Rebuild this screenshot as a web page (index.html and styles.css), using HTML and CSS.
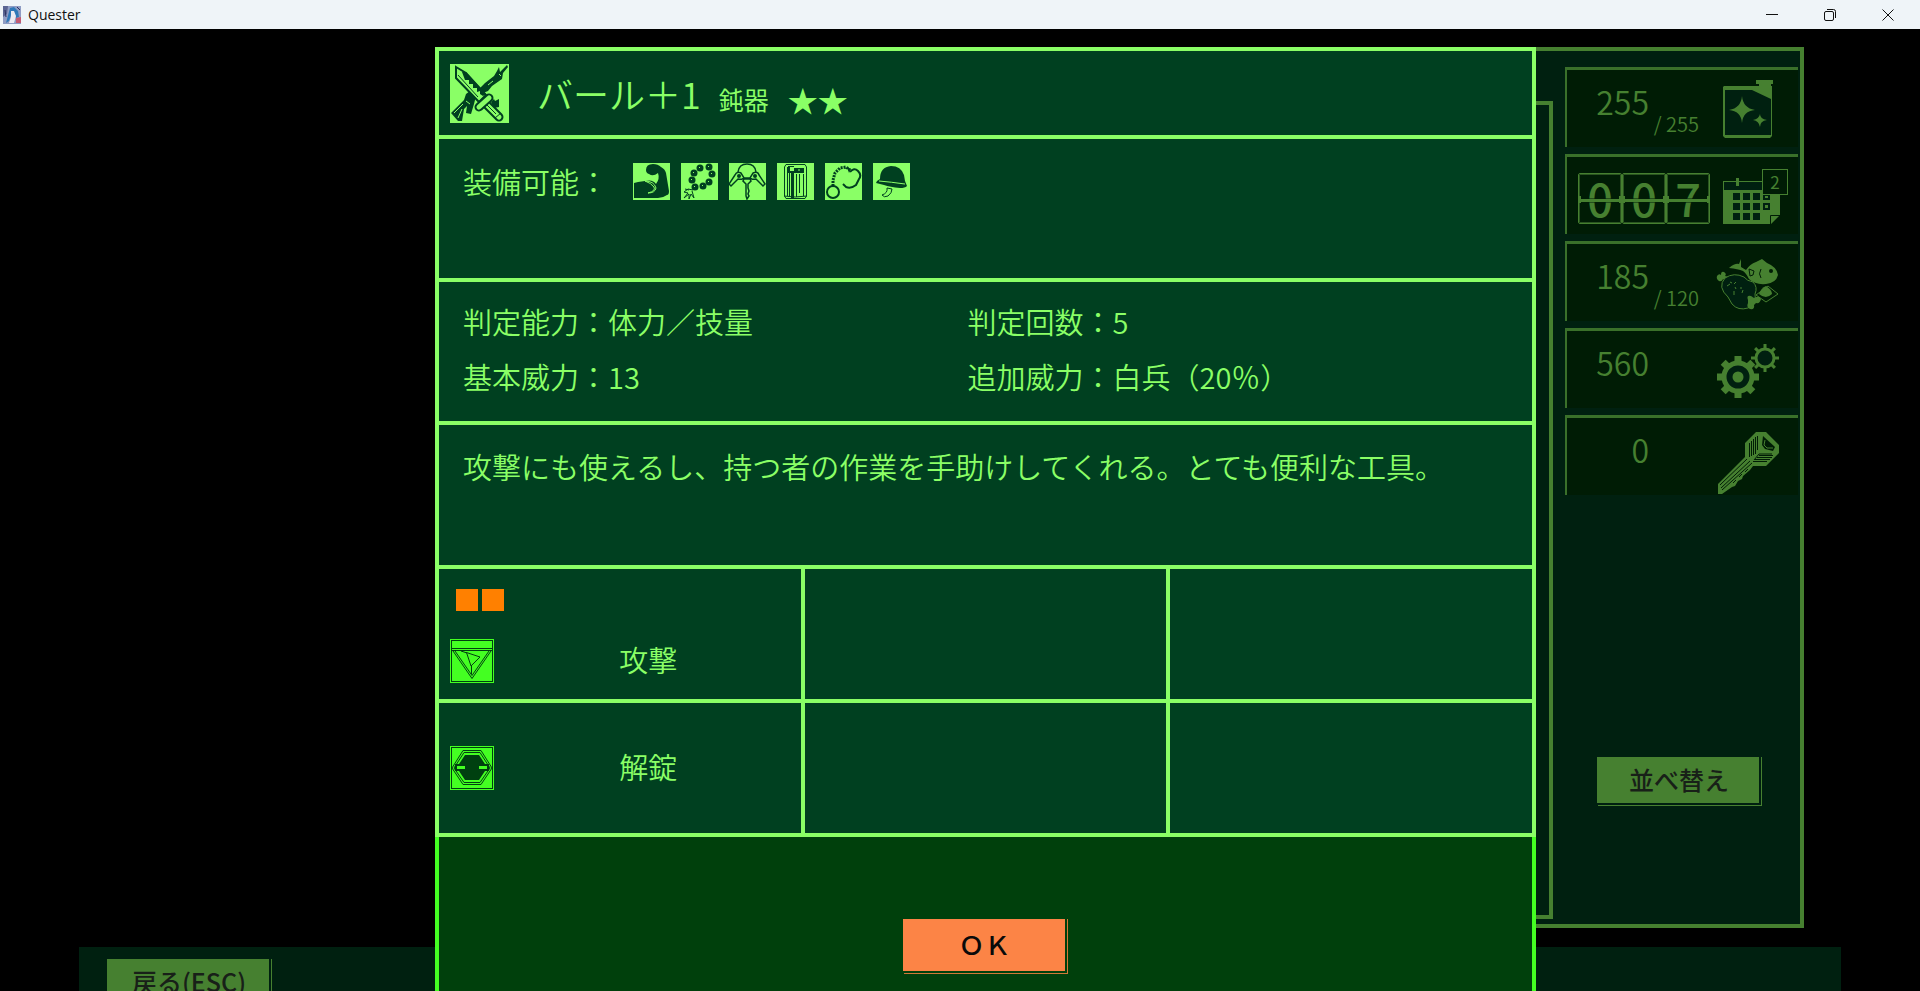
FILE: index.html
```html
<!DOCTYPE html>
<html lang="ja">
<head>
    <meta charset="UTF-8">
    <meta name="viewport" content="width=device-width, initial-scale=1.0">
    <title>Quester</title>
    <link rel="stylesheet" href="styles.css">
</head>
<body>

    <header class="titlebar">
        <svg class="app-icon" viewBox="0 0 18 18" aria-hidden="true">
            <rect width="18" height="18" fill="#8f9cc4"/>
            <path d="M0 0h5l-1 8-4 3z" fill="#5a6492"/>
            <path d="M7 2l4-1 4 4 1 6-3 1-2-6-3 3-2 6-3 2z" fill="#2f78b8"/>
            <path d="M8 5l3 0 2 5-2 7H6l2-6z" fill="#eceaf2"/>
            <path d="M13 12l5-1v6h-5z" fill="#c25a72"/>
            <path d="M2 4l1 7M14 1l3 3" stroke="#2b3160"/>
        </svg>
        <span class="app-name">Quester</span>
        <button class="win-button" aria-label="最小化">
            <svg viewBox="0 0 12 12"><path d="M0 5.500h12"/></svg>
        </button>
        <button class="win-button" aria-label="元に戻す">
            <svg viewBox="0 0 12 12"><rect x=".5" y="2.500" width="9" height="9" rx="1.500"/><path d="M3 .5h6.500a2 2 0 0 1 2 2V9"/></svg>
        </button>
        <button class="win-button" aria-label="閉じる">
            <svg viewBox="0 0 12 12"><path d="M.5.500l11 11M11.500.500l-11 11"/></svg>
        </button>
    </header>

    <main class="stage">

        <!-- 倉庫画面 -->
        <section class="base">
            <div class="item-list"></div>
            <aside class="status">
                <div class="resource">
                    <span class="value">255</span><span class="limit">/ 255</span>
                    <svg class="resource-icon" viewBox="0 0 72 78">
                        <path d="M8 18H56V67H8z" fill="#002010"/>
                        <path fill-rule="evenodd" d="M8 17H43V15H40V11H57V15H55V17H56V67L54 69H9L7 67V18zM9 21V66H55V30L36 21z"/>
                        <path d="M26 27Q27 39 39 41 27 42 26 54 25 42 13 41 25 39 26 27zM44 45Q44 50 51 51 44 52 44 58 43 52 37 51 43 50 44 45z"/>
                    </svg>
                </div>
                <div class="resource">
                    <div class="counter"><span>0</span><span>0</span><span>7</span></div>
                    <div class="calendar">
                        <svg class="resource-icon" viewBox="0 0 72 78">
                            <rect x="7.500" y="25.500" width="50" height="9" fill="#002010" stroke="#468030"/>
                            <path d="M7 34H64V59L55 68H7zM20 22h3v8h-3z"/>
                            <path d="M54.500 68V59.500H64" fill="none" stroke="#001c05"/>
                            <g fill="#002010">
                                <path d="M17 37h7v7h-7zM27 37h7v7h-7zM37 37h7v7h-7zM47 37h7v7h-7zM17 47h7v7h-7zM27 47h7v7h-7zM37 47h7v7h-7zM47 47h7v7h-7zM17 57h7v7h-7zM27 57h7v7h-7zM37 57h7v7h-7z"/>
                            </g>
                            <path d="M49 49h3v3h-3zM49 40h3v2h-3z"/>
                        </svg>
                        <span class="badge">2</span>
                    </div>
                </div>
                <div class="resource">
                    <span class="value">185</span><span class="limit">/ 120</span>
                    <svg class="resource-icon" viewBox="0 0 72 78">
                        <path d="M13 25Q19 20 23 21L25 16V24L30 27Q34 21 40 19L46 16 51 20Q61 24 62 32 60 40 50 41 39 42 33 36 30 30 27 28 22 26 13 25z"/>
                        <path d="M33 26L38 28 37 32 34 33z" fill="none" stroke="#001c05"/>
                        <path d="M45 26Q42 31 45 35" fill="none" stroke="#001c05"/>
                        <ellipse cx="55" cy="28" rx="2" ry="2" fill="#001c05"/>
                        <path d="M1 33q2-3 4-1 0-4 3-3 3 2 1 4l4 1-3 3-3-1q-1 3-4 2-3-2-2-5z"/>
                        <path d="M9 35Q18 29 28 34 31 38 37 39 42 44 39 51 41 61 32 65 22 68 16 61L12 54Q1 44 9 35z" fill="#002010" stroke="#468030"/>
                        <path d="M11 43l3-2M14 39l2 1M18 41l2-2M19 44l1 2M27 47l-1 3M18 48v4M24 45h2" stroke="#468030"/>
                        <path d="M40 52L52 43 62 51 50 59z" fill="#001c05" stroke="#468030"/>
                        <path d="M43 51Q45 45 50 43 56 47 56 51 50 57 43 51z"/>
                        <path d="M32 57q-2-5 3-4l3 2q5-3 7 1-1 5-5 4l-2 2q1 5-4 4-4-2-2-6z"/>
                    </svg>
                </div>
                <div class="resource">
                    <span class="value">560</span>
                    <svg class="resource-icon" viewBox="0 0 72 78">
                        <g transform="translate(49 28)">
                            <circle r="9" fill="#002010" stroke="#468030" stroke-width="3"/>
                            <path id="tooth-s" d="M-1.500-14h3v5h-3z"/>
                            <use href="#tooth-s" transform="rotate(45)"/><use href="#tooth-s" transform="rotate(90)"/><use href="#tooth-s" transform="rotate(135)"/><use href="#tooth-s" transform="rotate(180)"/><use href="#tooth-s" transform="rotate(225)"/><use href="#tooth-s" transform="rotate(270)"/><use href="#tooth-s" transform="rotate(315)"/>
                        </g>
                        <g transform="translate(22 47)">
                            <circle r="14" fill="#002010" stroke="#468030" stroke-width="5"/>
                            <circle r="5.500"/>
                            <path id="tooth-l" d="M-3.500-21h7v8h-7z"/>
                            <use href="#tooth-l" transform="rotate(45)"/><use href="#tooth-l" transform="rotate(90)"/><use href="#tooth-l" transform="rotate(135)"/><use href="#tooth-l" transform="rotate(180)"/><use href="#tooth-l" transform="rotate(225)"/><use href="#tooth-l" transform="rotate(270)"/><use href="#tooth-l" transform="rotate(315)"/>
                        </g>
                    </svg>
                </div>
                <div class="resource">
                    <span class="value">0</span>
                    <svg class="resource-icon" viewBox="0 0 72 78">
                        <path d="M40 15H50L63 28V36L50 49H37L34 53 27 59 26 62 22 64 19 69 16 70 6 77H2V67L29 40V26z"/>
                        <path d="M47 19L59 30 57 34 49 32 46 28z" fill="#001c05"/>
                        <path d="M49 23l-1 5 3 3 6 0" fill="none" stroke="#468030"/>
                        <path d="M33.500 26V40M35.500 24V39M37.500 22V38M39.500 20V37M41.500 19V33" stroke="#001c05"/>
                        <path d="M38 43l5-6h13M41 40.500h15M39 42.500h15M37 44.500h14M43 38.500h14" stroke="#001c05" fill="none"/>
                        <path d="M4 68L31 42M5 71L34 44M6 73L36 46" stroke="#001c05"/>
                        <path d="M17 66l3-3M23 60l3-3M29 55l3-3" stroke="#001c05"/>
                    </svg>
                </div>
                <button class="button sort">並べ替え</button>
            </aside>
        </section>
        <nav class="bottom-bar">
            <button class="button">戻る(ESC)</button>
        </nav>

        <!-- 装備詳細ダイアログ -->
        <div class="overlay">
            <section class="dialog" role="dialog" aria-labelledby="itemName">
                <div class="panel heading">
                    <svg class="item-icon" viewBox="0 0 59 59" aria-hidden="true">
                        <g class="ink">
                            <path d="M57 1L58 3 53 9 52 15 42 22 38 27 33 29 28 26 35 19 44 12 47 7 49 3 50 8z"/>
                            <path d="M1 49L14 36 16 30 20 27 26 32 24 40 21 50 16 49 17 42 14 45 12 57 8 57z"/>
                            <path d="M41 38l3-3 1 2 4-2v8l-5 1z"/>
                        </g>
                        <path class="leaf" d="M4 49l9-9M8 54l4-9M49 10l2 2M38 21l5-4M16 37l4 3"/>
                        <path class="outlined" d="M6 3L16 9 36 31 29 38 6 14z"/>
                        <path class="ink" d="M12 8h4L36 30l-3 2-3-2v-3l-3 1v-4l-4 0v-4l-4 0v-4l-4 0z"/>
                        <path class="ink-line" d="M8 11L28 33"/>
                        <path class="ink-line grip" d="M37 41L49 53"/>
                        <path class="leaf grip" d="M37 41L49 53"/>
                        <path class="ink-line" d="M37 41L46 50M45 54l6-5"/>
                        <path class="ink-line guard" d="M29 43L39 34"/>
                        <path class="leaf guard" d="M29 43L39 34"/>
                    </svg>
                    <h1 class="item-name" id="itemName">バール＋1</h1>
                    <span class="item-type">鈍器</span>
                    <span class="stars">★★</span>
                </div>

                <div class="panel equip">
                    <span>装備可能：</span>
                    <div class="class-icons">
                        <svg viewBox="0 0 37 37">
                            <path class="ink" d="M13 7Q13 1 20 1 25 1 28 4 32 6 33 10L36 28Q36 32 34 32 30 35 25 35H1V20L5 19 12 18Q20 16 23 21 27 16 25 10 20 14 16 11 13 10 13 7z"/>
                            <path class="leaf" d="M12 18Q21 18 23 25 22 30 15 30 23 28 21 24 18 20 12 18z"/>
                        </svg>
                        <svg viewBox="0 0 37 37">
                            <g class="ink">
                                <circle cx="19" cy="5" r="3.500"/><circle cx="28" cy="4" r="3.500"/><circle cx="31" cy="11" r="3.500"/><circle cx="28" cy="19" r="3.500"/><circle cx="22" cy="23" r="3.500"/><circle cx="14" cy="24" r="3.500"/><circle cx="11" cy="17" r="3.500"/><circle cx="13" cy="10" r="3.500"/>
                            </g>
                            <path class="leaf" d="M18 4l1 1M27 3l1 1M30 10l1 1M27 18l1 1M21 22l1 1M13 23l1 1M10 16l1 1M12 9l1 1"/>
                            <path class="ink-line" d="M12 27L7 26 3 29 7 30 3 35 8 31 8 36 10 31 13 35 11 28M8 27L4 26"/>
                        </svg>
                        <svg viewBox="0 0 37 37">
                            <path class="ink-thick" d="M9 9Q10 1 18 1t9 8M6 12Q8 8 12 10L15 15H21L24 10Q29 8 30 12L36 21 34 23 27 16Q22 17 22 15M6 12L0 21 2 23 9 16Q14 17 14 15M15 16H21L22 18 19 21V25L20 28 19 31 20 33 18 36 17 33V21L14 18z"/>
                            <g class="ink"><circle cx="10" cy="13" r="2"/><circle cx="26" cy="13" r="2"/></g>
                        </svg>
                        <svg viewBox="0 0 37 37">
                            <path class="ink-line" d="M9 1.500H28L29.500 4V33L28 35.500H9L7.500 33V4zM10.500 4V33M26.500 11V33M12.500 10V34M19.500 11V34M22.500 11V30M7 33Q18 35 30 33"/>
                            <path class="ink" d="M14 9h3v26h-3zM11 3h6v1h-4v4h4v2h-6zM17 5h10v5H17z"/>
                            <path class="leaf" d="M22 6v2"/>
                        </svg>
                        <svg viewBox="0 0 37 37">
                            <circle class="ink-bold" cx="8" cy="29" r="6"/>
                            <path class="ink-line chain" d="M8 23V17L10 10 15 5 21 4 25 7"/>
                            <path class="ink-bold" d="M25 9Q29 4 33 8 37 12 34 16L31 22Q26 26 21 24L18 21"/>
                            <path class="ink" d="M22 4l4 2-2 4z"/>
                        </svg>
                        <svg viewBox="0 0 37 37">
                            <path class="outlined thin" d="M14 25Q15 30 9 32 11 35 15 33 19 30 19 26z"/>
                            <path class="ink" d="M7 16Q7 4 18 3 28 3 31 12L32 18 34 23Q32 25 27 25 17 24 11 22L3 20 4 18z"/>
                            <path class="leaf" d="M6 18Q18 19 32 21"/>
                        </svg>
                    </div>
                </div>

                <div class="panel stats">
                    <span>判定能力：体力／技量</span>
                    <span>判定回数：5</span>
                    <span>基本威力：13</span>
                    <span>追加威力：白兵（20％）</span>
                </div>

                <p class="panel description">攻撃にも使えるし、持つ者の作業を手助けしてくれる。とても便利な工具。</p>

                <div class="skills">
                    <div class="panel skill">
                        <div class="cost"><i></i><i></i></div>
                        <div class="skill-row">
                            <svg class="skill-icon" viewBox="0 0 44 44">
                                <rect width="44" height="44" fill="#4f2"/>
                                <rect x="1.500" y="1.500" width="41" height="41"/>
                                <path d="M2 9.500h40M2 11.500h40M3 12L22 39.500 41 12M5 12L22 36.500 39 12"/>
                                <path d="M16.500 13.500L30 18 21 27z"/>
                                <path d="M21.500 27v8M11 12l6 2"/>
                            </svg>
                            <span>攻撃</span>
                        </div>
                    </div>
                    <div class="panel"></div>
                    <div class="panel"></div>
                    <div class="panel skill">
                        <div class="skill-row">
                            <svg class="skill-icon" viewBox="0 0 44 44">
                                <rect width="44" height="44" fill="#4f2"/>
                                <rect x="1.500" y="1.500" width="41" height="41"/>
                                <path d="M2 22L13 4.500H31L42 22 31 38.500H13zM4 22L14 6.500H30L40 22 30 36.500H14z"/>
                                <path class="hole" d="M15 9H29L35 18H39V25H35L29 34H15L9 25H5V18H9z"/>
                                <path class="bar" d="M7 20h8v3H7zM29 20h8v3h-8z"/>
                            </svg>
                            <span>解錠</span>
                        </div>
                    </div>
                    <div class="panel"></div>
                    <div class="panel"></div>
                </div>

                <div class="dialog-footer">
                    <button class="button ok">ＯＫ</button>
                </div>
            </section>
        </div>

    </main>

</body>
</html>
```
FILE: styles.css
```css
* {
    box-sizing: border-box;
}

body {
    margin: 0;
    height: 100vh;
    display: flex;
    flex-direction: column;
    overflow: hidden;
    background: #000;
    font-family: 'Noto Sans CJK JP', sans-serif;
    font-weight: 350;
}

svg {
    display: block;
}

button {
    border: none;
    padding: 0;
    font-family: inherit;
    cursor: pointer;
}

/* ウィンドウのタイトルバー */
.titlebar {
    height: 29px;
    flex: none;
    display: flex;
    align-items: center;
    padding: 0 3px;
    background: #eff4f8;
}

.app-icon {
    width: 18px;
    height: 18px;
}

.app-name {
    flex: 1;
    margin-left: 7px;
    font: 400 14px 'Open Sans', sans-serif;
    color: #111;
}

.win-button {
    width: 58px;
    height: 29px;
    display: flex;
    align-items: center;
    justify-content: center;
    background: none;
}

.win-button svg {
    width: 12px;
    height: 12px;
    fill: none;
    stroke: #111;
}

.stage {
    position: relative;
    flex: 1;
    min-height: 0;
    overflow: hidden;
}

/* 背景の画面 */
.base {
    display: flex;
    min-height: 881px;
    margin: 18px 116px 0 440px;
    border: 4px solid #468030;
    background: #002010;
    color: #468030;
}

.item-list {
    flex: 1;
    margin: 50px 0 5px;
    border: 4px solid #468030;
    border-left: none;
}

.status {
    width: 247px;
    padding: 16px 2px 0 12px;
}

.resource {
    display: flex;
    height: 80px;
    margin-bottom: 7px;
    padding-right: 10px;
    border-top: 3px solid #3a702a;
    border-left: 2px solid #3a702a;
    background: #001c05;
}

.value {
    width: 82px;
    text-align: right;
    font-size: 32px;
    line-height: 62px;
}

.limit {
    width: 50px;
    margin-top: 37px;
    text-align: right;
    font-size: 20px;
    line-height: 34px;
}

.resource-icon {
    width: 72px;
    height: 78px;
    margin: -1px 0 0 auto;
    fill: #468030;
}

.counter {
    display: flex;
    height: 51px;
    margin: 16px 0 0 11px;
}

.counter span {
    position: relative;
    width: 44px;
    border: 1px solid #468030;
    outline: 1px solid #2a5420;
    outline-offset: -2px;
    border-radius: 2px;
    text-align: center;
    font-size: 45px;
    font-weight: 500;
    line-height: 47px;
}

/* 数字の中央を横切る線とヒンジ */
.counter span::before {
    content: "";
    position: absolute;
    top: 24px;
    left: 0;
    right: 0;
    height: 3px;
    border: solid rgba(0, 28, 5, 0.5);
    border-width: 1px 0;
    background: #468030;
    background-clip: padding-box;
}

.counter span::after {
    content: "";
    position: absolute;
    top: 22px;
    left: -1px;
    right: -1px;
    height: 7px;
    border: dotted #468030;
    border-width: 0 3px;
}

.calendar {
    position: relative;
    margin-left: auto;
}

.badge {
    position: absolute;
    top: 12px;
    right: 0;
    width: 26px;
    height: 26px;
    border: 1px solid #468030;
    background: #001c05;
    text-align: center;
    font-size: 17px;
    font-weight: 400;
    line-height: 24px;
}

.bottom-bar {
    height: 100px;
    margin: 19px 79px 0;
    padding: 12px 28px;
    background: #002010;
}

/* 右下にずれた細い枠が付くボタン */
.button {
    position: relative;
    width: 162px;
    height: 46px;
    padding: 0 0 2px 2px;
    background: #468030;
    color: #182018;
    font-size: 25px;
    font-weight: 500;
    line-height: 42px;
}

.button::after {
    content: "";
    position: absolute;
    top: 0;
    left: 1px;
    right: -3px;
    bottom: -3px;
    border: solid #468030;
    border-width: 0 1px 1px 0;
}

.sort {
    margin: 255px 0 0 32px;
}

/* ダイアログ */
.overlay {
    position: absolute;
    inset: 0;
    display: flex;
    padding: 18px 384px 0 435px;
}

.dialog {
    flex: 1;
    display: flex;
    flex-direction: column;
    color: #8aff66;
    font-size: 29px;
    line-height: 55px;
}

.dialog > .panel,
.skills {
    border: 4px solid #8aff66;
    border-bottom: none;
}

.panel {
    background: #004020;
}

.heading {
    display: flex;
    align-items: center;
    height: 88px;
    padding: 0 11px;
}

.item-icon {
    width: 59px;
    height: 59px;
    background: #8aff66;
}

.item-name {
    margin: 0 0 0 28px;
    font-size: 36px;
    font-weight: 350;
}

.item-type {
    margin: 12px 0 0 18px;
    font-size: 25px;
    font-weight: 400;
}

.stars {
    margin: 12px 0 0 19px;
    font-size: 30px;
}

.equip {
    display: flex;
    align-items: flex-start;
    height: 143px;
    padding: 15px 24px;
}

.class-icons {
    display: flex;
    gap: 11px;
    margin: 9px 0 0 25px;
}

.class-icons svg {
    width: 37px;
    height: 37px;
    background: #8aff66;
}

.ink {
    fill: #004020;
}

.ink-line,
.ink-thick,
.ink-bold {
    fill: none;
    stroke: #004020;
}

.ink-thick {
    stroke-width: 1.5;
}

.ink-bold {
    stroke-width: 2;
}

.chain {
    stroke-width: 3;
    stroke-dasharray: 2 1;
}

.leaf {
    fill: none;
    stroke: #8aff66;
}

.ink-line.grip,
.ink-line.guard {
    stroke-width: 9;
    stroke-linecap: round;
}

.leaf.grip,
.leaf.guard {
    stroke-width: 5;
    stroke-linecap: round;
}

.outlined {
    fill: #8aff66;
    stroke: #004020;
    stroke-width: 2;
}

.outlined.thin {
    stroke-width: 1;
}

.stats {
    display: grid;
    grid-template-columns: 1fr 1fr;
    align-content: start;
    height: 143px;
    padding: 12px 60px 0 24px;
}

.description {
    height: 144px;
    margin: 0;
    padding: 14px 24px;
}

.skills {
    display: grid;
    grid-template-columns: repeat(3, 1fr);
    grid-auto-rows: 130px;
    gap: 4px;
    border-bottom: 4px solid #8aff66;
    background: #8aff66;
}

.skill {
    display: flex;
    flex-direction: column;
    justify-content: center;
    gap: 28px;
    padding: 4px 0 0 11px;
}

.skill:nth-child(4) {
    padding-top: 0;
}

.cost {
    display: flex;
    gap: 4px;
    padding-left: 6px;
}

.cost i {
    width: 22px;
    height: 22px;
    background: #ff8000;
}

.skill-row {
    display: flex;
    align-items: center;
    height: 44px;
}

.skill-row span {
    flex: 1;
    padding: 0 0 4px 2px;
    text-align: center;
}

.skill-icon {
    width: 44px;
    height: 44px;
    fill: none;
    stroke: #004010;
}

.skill-icon > rect:first-child {
    stroke: none;
}

.hole {
    fill: #004010;
    stroke: none;
}

.bar {
    fill: #4f2;
    stroke: none;
}

.dialog-footer {
    flex: 1;
    padding: 82px 4px 0 0;
    border: solid #4f2;
    border-width: 0 4px;
    background: #00400c;
    text-align: center;
    line-height: 0;
}

.ok {
    height: 52px;
    background: #fc8446;
    color: #0a0a0a;
    font-size: 26px;
    line-height: 50px;
}

.ok::after {
    border-color: #d07838;
}
```
